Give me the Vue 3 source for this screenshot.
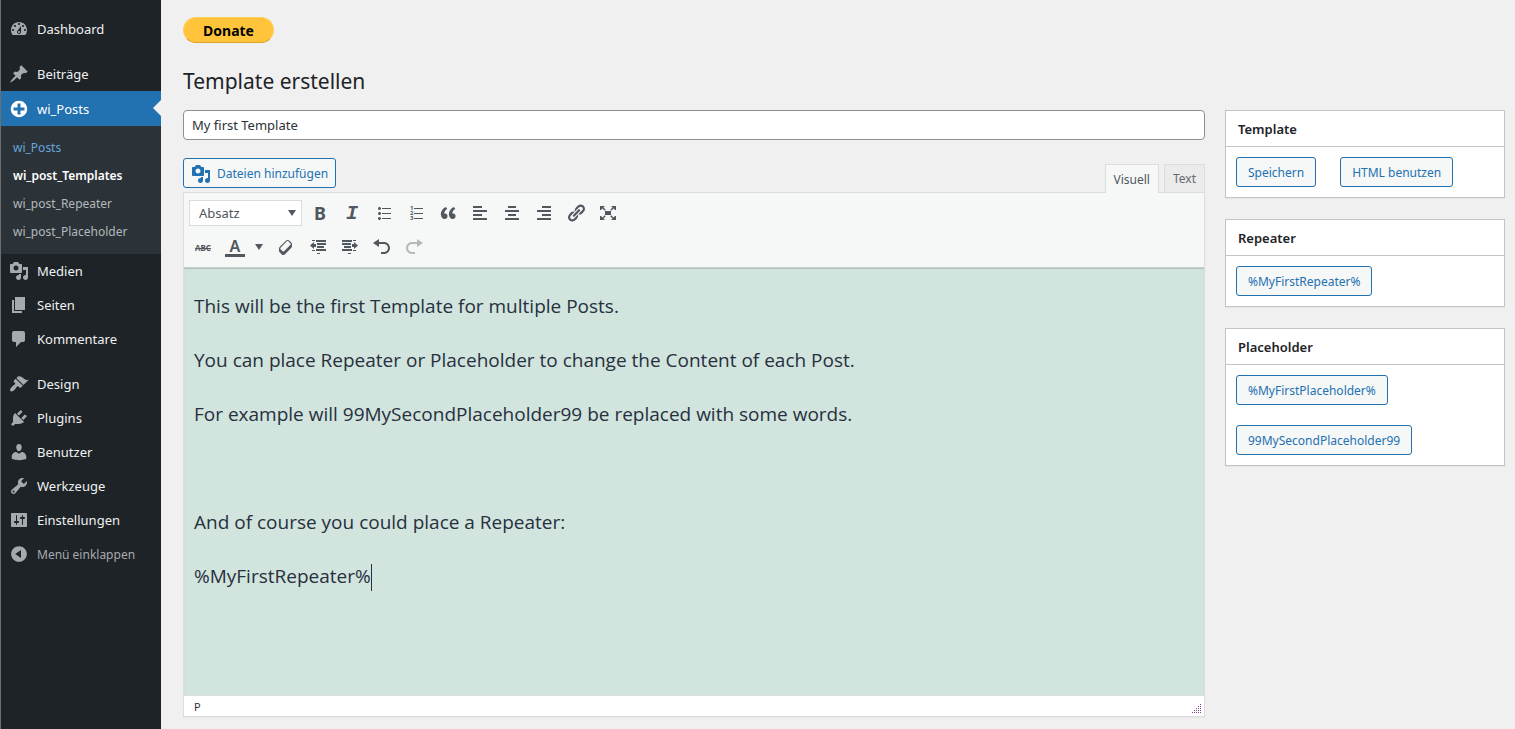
<script setup>
import { ref } from 'vue'

const title = ref('My first Template')
const format = ref('Absatz')

const icons = {
  dashboard: 'M3.76 16h12.48c1.1-1.37 1.76-3.11 1.76-5 0-4.42-3.58-8-8-8s-8 3.58-8 8c0 1.89.66 3.63 1.76 5zM10 4c.55 0 1 .45 1 1s-.45 1-1 1-1-.45-1-1 .45-1 1-1zM6 6c.55 0 1 .45 1 1s-.45 1-1 1-1-.45-1-1 .45-1 1-1zm8 0c.55 0 1 .45 1 1s-.45 1-1 1-1-.45-1-1 .45-1 1-1zm-5.37 5.55L12 7v6c0 1.1-.9 2-2 2s-2-.9-2-2c0-.57.24-1.08.63-1.45zM4 10c.55 0 1 .45 1 1s-.45 1-1 1-1-.45-1-1 .45-1 1-1zm12 0c.55 0 1 .45 1 1s-.45 1-1 1-1-.45-1-1 .45-1 1-1zm-5 3c0-.55-.45-1-1-1s-1 .45-1 1 .45 1 1 1 1-.45 1-1z',
  pin: 'M10.44 3.02l1.82-1.82 6.36 6.35-1.83 1.82c-1.05-.68-2.48-.57-3.41.36l-.75.75c-.92.93-1.04 2.35-.35 3.41l-1.83 1.82-2.41-2.41-2.8 2.79c-.42.42-3.38 2.71-3.8 2.29s1.86-3.39 2.28-3.81l2.79-2.79L4.1 9.36l1.83-1.82c1.05.69 2.48.57 3.4-.36l.75-.75c.93-.92 1.05-2.35.36-3.41z',
  plus: 'M15.8 4.2c3.2 3.21 3.2 8.39 0 11.6-3.21 3.2-8.39 3.2-11.6 0C1 12.59 1 7.41 4.2 4.2 7.41 1 12.59 1 15.8 4.2zm-4.3 11.3v-4h4v-3h-4v-4h-3v4h-4v3h4v4h3z',
  media: 'M13 11V4c0-.55-.45-1-1-1h-1.67L9 1H5L3.67 3H2c-.55 0-1 .45-1 1v7c0 .55.45 1 1 1h10c.55 0 1-.45 1-1zM7 4.5c1.38 0 2.5 1.12 2.5 2.5S8.38 9.5 7 9.5 4.5 8.38 4.5 7 5.62 4.5 7 4.5zM14 6h5v10.5c0 1.38-1.12 2.5-2.5 2.5S14 17.88 14 16.5s1.12-2.5 2.5-2.5c.17 0 .34.02.5.05V9h-3V6zm-4 8.05V13h2v3.5c0 1.38-1.12 2.5-2.5 2.5S7 17.88 7 16.5 8.12 14 9.5 14c.17 0 .34.02.5.05z',
  page: 'M6 15V2h10v13H6zm-1 1h8v2H3V5h2v11z',
  comment: 'M5 2h9c1.1 0 2 .9 2 2v7c0 1.1-.9 2-2 2h-2l-5 5v-5H5c-1.1 0-2-.9-2-2V4c0-1.1.9-2 2-2z',
  brush: 'M14.48 11.06L7.41 3.99l1.5-1.5c.5-.56 2.3-.47 3.51.32 1.21.8 1.43 1.28 2.91 2.1 1.18.64 2.45 1.26 4.45.85zm-.71.71L6.7 4.7 4.93 6.47c-.39.39-.39 1.02 0 1.41l1.06 1.06c.39.39.39 1.03 0 1.42-.6.6-1.43 1.11-2.21 1.69-.35.26-.7.53-1.01.84C1.43 14.23.4 16.08 1.4 17.07c.99 1 2.84-.03 4.18-1.36.31-.31.58-.66.85-1.02.57-.78 1.08-1.61 1.69-2.21.39-.39 1.02-.39 1.41 0l1.06 1.06c.39.39 1.02.39 1.41 0z',
  plug: 'M13.11 4.36L9.87 7.6 8 5.73l3.24-3.24c.35-.34 1.05-.2 1.56.32.52.51.66 1.21.31 1.55zm-8 1.77l.91-1.12 9.01 9.01-1.19.84c-.71.71-2.63 1.16-3.82 1.16H6.14L4.9 17.26c-.59.59-1.54.59-2.12 0-.59-.58-.59-1.53 0-2.12l1.24-1.24v-3.88c0-1.13.4-3.19 1.09-3.89zm7.26 3.97l3.24-3.24c.34-.35 1.04-.21 1.55.31.52.51.66 1.21.31 1.55l-3.24 3.25z',
  user: 'M10 9.25c-2.27 0-2.73-3.44-2.73-3.44C7 4.02 7.82 2 9.97 2c2.16 0 2.98 2.02 2.71 3.81 0 0-.41 3.44-2.68 3.44zm0 2.57L12.72 10c2.39 0 4.52 2.33 4.52 4.53v2.49s-3.65 1.13-7.24 1.13c-3.65 0-7.24-1.13-7.24-1.13v-2.49c0-2.25 1.94-4.48 4.47-4.48z',
  wrench: 'M16.68 9.77c-1.34 1.34-3.3 1.67-4.95.99l-5.41 6.52c-.99.99-2.59.99-3.58 0s-.99-2.59 0-3.57l6.52-5.42c-.68-1.65-.35-3.61.99-4.95 1.28-1.28 3.12-1.62 4.72-1.06l-2.89 2.89 2.82 2.82 2.86-2.87c.53 1.58.18 3.39-1.08 4.65zM3.81 16.21c.4.39 1.04.39 1.43 0 .4-.4.4-1.04 0-1.43-.39-.4-1.03-.4-1.43 0-.39.39-.39 1.03 0 1.43z',
  sliders: 'M18 16V4c0-.55-.45-1-1-1H3c-.55 0-1 .45-1 1v12c0 .55.45 1 1 1h14c.55 0 1-.45 1-1zM8 11h1c.55 0 1 .45 1 1s-.45 1-1 1H8v1.5c0 .28-.22.5-.5.5s-.5-.22-.5-.5V13H6c-.55 0-1-.45-1-1s.45-1 1-1h1V5.5c0-.28.22-.5.5-.5s.5.22.5.5V11zm5-2h-1c-.55 0-1-.45-1-1s.45-1 1-1h1V5.5c0-.28.22-.5.5-.5s.5.22.5.5V7h1c.55 0 1 .45 1 1s-.45 1-1 1h-1v5.5c0 .28-.22.5-.5.5s-.5-.22-.5-.5V9z',
  collapse: 'M10 2.16c4.33 0 7.84 3.51 7.84 7.84s-3.51 7.84-7.84 7.84S2.16 14.33 2.16 10 5.71 2.16 10 2.16zm2 11.72V6.12L6.18 9.97z',
  bullets: 'M5.5 7C4.67 7 4 6.33 4 5.5 4 4.68 4.67 4 5.5 4 6.32 4 7 4.68 7 5.5 7 6.33 6.32 7 5.5 7zM8 5h9v1H8V5zm-2.5 7c-.83 0-1.5-.67-1.5-1.5C4 9.68 4.67 9 5.5 9c.82 0 1.5.68 1.5 1.5 0 .83-.68 1.5-1.5 1.5zM8 10h9v1H8v-1zm-2.5 7c-.83 0-1.5-.67-1.5-1.5 0-.82.67-1.5 1.5-1.5.82 0 1.5.68 1.5 1.5 0 .83-.68 1.5-1.5 1.5zM8 15h9v1H8v-1z',
  quote: 'M9.49 13.22c0-.74-.2-1.38-.61-1.9-.62-.78-1.83-.88-2.53-.72-.29-1.65 1.11-3.75 2.92-4.65L7.88 4c-2.73 1.3-5.42 4.28-4.96 8.05C3.21 14.43 4.59 16 6.54 16c.85 0 1.56-.25 2.12-.75s.83-1.18.83-2.03zm8.05 0c0-.74-.2-1.38-.61-1.9-.63-.78-1.83-.88-2.53-.72-.29-1.65 1.11-3.75 2.92-4.65L15.93 4c-2.73 1.3-5.41 4.28-4.95 8.05.29 2.38 1.66 3.95 3.61 3.95.85 0 1.56-.25 2.12-.75s.83-1.18.83-2.03z',
  left: 'M12 5V3H3v2h9zm5 4V7H3v2h14zm-5 4v-2H3v2h9zm5 4v-2H3v2h14z',
  center: 'M14 5V3H6v2h8zm3 4V7H3v2h14zm-3 4v-2H6v2h8zm3 4v-2H3v2h14z',
  right: 'M17 5V3H8v2h9zm0 4V7H3v2h14zm0 4v-2H8v2h9zm0 4v-2H3v2h14z',
  link: 'M17.74 2.76c1.68 1.69 1.68 4.41 0 6.1l-1.53 1.52c-1.12 1.12-2.7 1.47-4.14 1.09l2.62-2.61.76-.77.76-.76c.84-.84.84-2.2 0-3.04-.84-.85-2.2-.85-3.04 0l-.77.76-3.38 3.38c-.37-1.44-.02-3.02 1.1-4.14l1.52-1.53c1.69-1.68 4.42-1.68 6.1 0zM8.59 13.43l5.34-5.34c.42-.42.42-1.1 0-1.52-.44-.43-1.13-.39-1.53 0l-5.33 5.34c-.42.42-.42 1.1 0 1.52.44.43 1.13.39 1.52 0zm-.76 2.29l4.14-4.15c.38 1.44.03 3.02-1.09 4.14l-1.52 1.53c-1.69 1.68-4.41 1.68-6.1 0-1.68-1.68-1.68-4.42 0-6.1l1.53-1.52c1.12-1.12 2.7-1.47 4.14-1.1l-4.14 4.15c-.85.84-.85 2.2 0 3.05.84.84 2.2.84 3.04 0z',
  expand: 'M7 8h6v4H7zM2 3h5L5.400 4.400 7.800 6.800 6.800 7.800 4.400 5.400 3 7H2zM18 3v4h-1l-1.400-1.600-2.400 2.400-1-1 2.400-2.400L13 3zM2 17v-4h1l1.400 1.600 2.400-2.400 1 1-2.400 2.400L7 17zM18 17h-5l1.600-1.400-2.400-2.400 1-1 2.400 2.400L17 13h1z',
  eraser: 'M14.29 4.59l1.1 1.11c.41.4.61.94.61 1.47v2.12c0 .53-.2 1.07-.61 1.47l-6.63 6.63c-.4.41-.94.61-1.47.61s-1.07-.2-1.47-.61l-1.11-1.1-1.1-1.11c-.41-.4-.61-.94-.61-1.47v-2.12c0-.54.2-1.07.61-1.48l6.63-6.62c.4-.41.94-.61 1.47-.61s1.06.2 1.47.61zm-6.21 9.7l6.42-6.42c.39-.39.39-1.03 0-1.43L12.36 4.3c-.19-.19-.45-.29-.72-.29s-.52.1-.71.29l-6.42 6.42c-.39.4-.39 1.04 0 1.43l2.14 2.14c.38.38 1.04.38 1.43 0z',
  outdent: 'M4 3h3v1H4zM8 3h10v2H8zM9 6h9v2H9zM9 9h7v2H9zM8 12h10v2H8zM4 13h3v1H4zM9 16h3v1H9zM2 8.500L6 5v2h2v3H6v2z',
  indent: 'M13 3h3v1h-3zM2 3h10v2H2zM2 6h9v2H2zM4 9h7v2H4zM2 12h10v2H2zM13 13h3v1h-3zM8 16h3v1H8zM18 8.500L14 5v2h-2v3h2v2z',
  undo: 'M12 5H7V2L1 6l6 4V7h5c2.200 0 4 1.800 4 4s-1.800 4-4 4H9v2h3c3.300 0 6-2.700 6-6s-2.700-6-6-6z',
  redo: 'M8 5h5V2l6 4-6 4V7H8c-2.200 0-4 1.800-4 4s1.800 4 4 4h3v2H8c-3.300 0-6-2.700-6-6s2.700-6 6-6z'
}

const menu = [
  [{ label: 'Dashboard', icon: 'dashboard' }],
  [
    { label: 'Beiträge', icon: 'pin' },
    {
      label: 'wi_Posts', icon: 'plus', current: true,
      children: [
        { label: 'wi_Posts', hover: true },
        { label: 'wi_post_Templates', active: true },
        { label: 'wi_post_Repeater' },
        { label: 'wi_post_Placeholder' }
      ]
    },
    { label: 'Medien', icon: 'media' },
    { label: 'Seiten', icon: 'page' },
    { label: 'Kommentare', icon: 'comment' }
  ],
  [
    { label: 'Design', icon: 'brush' },
    { label: 'Plugins', icon: 'plug' },
    { label: 'Benutzer', icon: 'user' },
    { label: 'Werkzeuge', icon: 'wrench' },
    { label: 'Einstellungen', icon: 'sliders' }
  ]
]

const rowOne = [
  { name: 'Fett', letter: 'B', cls: 'bold' },
  { name: 'Kursiv', letter: 'I', cls: 'italic' },
  { name: 'Aufzählung', icon: 'bullets' },
  { name: 'Nummerierung', numbers: true },
  { name: 'Zitat', icon: 'quote' },
  { name: 'Linksbündig', icon: 'left' },
  { name: 'Zentriert', icon: 'center' },
  { name: 'Rechtsbündig', icon: 'right' },
  { name: 'Link', icon: 'link' },
  { name: 'Vollbild', icon: 'expand' }
]

const rowTwo = [
  { name: 'Formatierung entfernen', icon: 'eraser' },
  { name: 'Einzug verkleinern', icon: 'outdent' },
  { name: 'Einzug vergrößern', icon: 'indent' },
  { name: 'Rückgängig', icon: 'undo' },
  { name: 'Wiederholen', icon: 'redo', disabled: true }
]

const panels = [
  { title: 'Template', buttons: ['Speichern', 'HTML benutzen'] },
  { title: 'Repeater', buttons: ['%MyFirstRepeater%'] },
  { title: 'Placeholder', buttons: ['%MyFirstPlaceholder%', '99MySecondPlaceholder99'], stacked: true }
]
</script>

<template>
  <div class="admin">
    <nav class="sidebar" aria-label="Hauptmenü">
      <ul v-for="(group, g) in menu" :key="g" class="menu">
        <li v-for="item in group" :key="item.label">
          <a href="#" class="item" :class="{ current: item.current }">
            <svg class="icon" viewBox="0 0 20 20" aria-hidden="true"><path fill-rule="evenodd" :d="icons[item.icon]" /></svg>
            <span>{{ item.label }}</span>
          </a>
          <ul v-if="item.children" class="submenu">
            <li v-for="child in item.children" :key="child.label">
              <a href="#" :class="{ hover: child.hover, active: child.active }">{{ child.label }}</a>
            </li>
          </ul>
        </li>
      </ul>
      <button class="item collapse" type="button">
        <svg class="icon" viewBox="0 0 20 20" aria-hidden="true"><path fill-rule="evenodd" :d="icons.collapse" /></svg>
        <span>Menü einklappen</span>
      </button>
    </nav>

    <main class="content">
      <button class="donate" type="button">Donate</button>
      <h1>Template erstellen</h1>

      <div class="columns">
        <div class="primary">
          <input v-model="title" class="title" type="text" aria-label="Titel">

          <div class="tools">
            <button class="button media" type="button">
              <svg class="icon" viewBox="0 0 20 20" aria-hidden="true"><path fill-rule="evenodd" :d="icons.media" /></svg>
              <span>Dateien hinzufügen</span>
            </button>
            <div class="tabs">
              <button class="tab selected" type="button">Visuell</button>
              <button class="tab" type="button">Text</button>
            </div>
          </div>

          <section class="editor">
            <div class="toolbar">
              <div class="row">
                <div class="format">
                  <select v-model="format" aria-label="Absatzformat">
                    <option>Absatz</option>
                  </select>
                  <svg class="arrow" viewBox="0 0 10 6" aria-hidden="true"><path d="M1 0h8L5 6z" /></svg>
                </div>
                <button v-for="b in rowOne" :key="b.name" class="tool" type="button" :aria-label="b.name">
                  <span v-if="b.letter" :class="b.cls">{{ b.letter }}</span>
                  <svg v-else-if="b.numbers" class="icon" viewBox="0 0 20 20" aria-hidden="true">
                    <path d="M8 5h9v1H8zM8 10h9v1H8zM8 15h9v1H8z" />
                    <text x="4" y="7">1</text>
                    <text x="4" y="12">2</text>
                    <text x="4" y="17">3</text>
                  </svg>
                  <svg v-else class="icon" viewBox="0 0 20 20" aria-hidden="true"><path :d="icons[b.icon]" /></svg>
                </button>
              </div>
              <div class="row">
                <button class="tool" type="button" aria-label="Durchgestrichen"><s class="strike">ABC</s></button>
                <div class="split">
                  <button class="tool" type="button" aria-label="Textfarbe"><span class="color">A</span></button>
                  <button class="more" type="button" aria-label="Farbe wählen">
                    <svg class="arrow" viewBox="0 0 10 6" aria-hidden="true"><path d="M1 0h8L5 6z" /></svg>
                  </button>
                </div>
                <button v-for="b in rowTwo" :key="b.name" class="tool" type="button" :aria-label="b.name" :disabled="b.disabled">
                  <svg class="icon" viewBox="0 0 20 20" aria-hidden="true"><path :d="icons[b.icon]" /></svg>
                </button>
              </div>
            </div>

            <div class="document" contenteditable="true" role="textbox" aria-multiline="true" aria-label="Inhalt" spellcheck="false">
              <p>This will be the first Template for multiple Posts.</p>
              <p>You can place Repeater or Placeholder to change the Content of each Post.</p>
              <p>For example will 99MySecondPlaceholder99 be replaced with some words.</p>
              <p>&nbsp;</p>
              <p>And of course you could place a Repeater:</p>
              <p>%MyFirstRepeater%<span class="caret"></span></p>
            </div>

            <footer class="status">
              <span>P</span>
              <svg class="grip" viewBox="0 0 10 10" aria-hidden="true">
                <path d="M8 0h1v1H8zM6 2h1v1H6zM8 2h1v1H8zM4 4h1v1H4zM6 4h1v1H6zM8 4h1v1H8zM2 6h1v1H2zM4 6h1v1H4zM6 6h1v1H6zM8 6h1v1H8zM0 8h1v1H0zM2 8h1v1H2zM4 8h1v1H4zM6 8h1v1H6zM8 8h1v1H8z" />
              </svg>
            </footer>
          </section>
        </div>

        <aside class="panels">
          <section v-for="p in panels" :key="p.title" class="panel">
            <h2>{{ p.title }}</h2>
            <div class="actions" :class="{ stacked: p.stacked }">
              <button v-for="label in p.buttons" :key="label" class="button" type="button">{{ label }}</button>
            </div>
          </section>
        </aside>
      </div>
    </main>
  </div>
</template>

<style>
body {
  margin: 0;
  background: #f0f0f0;
}
</style>

<style scoped>
.admin {
  display: flex;
  min-height: 100vh;
  font-family: "Noto Sans", "Open Sans", sans-serif;
  font-size: 13px;
  color: #3c434a;
  background: #f0f0f0;
}

.admin *,
.admin *::before,
.admin *::after {
  box-sizing: border-box;
}

button,
input,
select {
  font: inherit;
  margin: 0;
}

button {
  cursor: pointer;
}

.icon {
  display: block;
  flex: none;
  width: 20px;
  height: 20px;
  fill: currentColor;
}

/* Sidebar */
.sidebar {
  flex: 0 0 161px;
  padding-top: 12px;
  border-left: 1px solid #6e6e6e;
  background: #1d2327;
}

.menu,
.submenu {
  margin: 0;
  padding: 0;
  list-style: none;
}

.menu + .menu {
  margin-top: 11px;
}

.item {
  position: relative;
  display: flex;
  align-items: center;
  gap: 8px;
  width: 100%;
  height: 34px;
  padding: 0 8px;
  border: 0;
  background: none;
  color: #f0f0f1;
  text-decoration: none;
}

.item .icon {
  color: #a7aaad;
}

.item.current {
  height: 35px;
  background: #2271b1;
  color: #fff;
}

.item.current .icon {
  color: #fff;
}

.item.current::after {
  content: "";
  position: absolute;
  top: 9px;
  right: 0;
  border: 8px solid transparent;
  border-left-width: 0;
  border-right-color: #f0f0f0;
}

.collapse {
  font-size: 12px;
  color: #a7aaad;
}

.submenu {
  padding: 8px 0;
  background: #2c3338;
}

.submenu a {
  display: block;
  padding: 0 12px;
  font-size: 12px;
  line-height: 28px;
  color: #b4b8bc;
  text-decoration: none;
}

.submenu a.hover {
  color: #66a3dc;
}

.submenu a.active {
  font-weight: 600;
  color: #fff;
}

/* Content */
.content {
  flex: 1;
  min-width: 0;
  padding: 17px 10px 12px 22px;
}

.donate {
  display: block;
  width: 91px;
  height: 26px;
  padding: 1px 0 0;
  border: 1px solid #ffcf5a;
  border-bottom-color: #dfa22c;
  border-radius: 13px;
  background: #ffc439;
  font-size: 14px;
  font-weight: 700;
  line-height: 23px;
  color: #000;
}

h1 {
  margin: 22px 0 13px;
  font-family: "Noto Sans", "Open Sans", sans-serif;
  font-size: 21px;
  font-weight: 400;
  line-height: 32px;
  color: #1d2327;
}

.columns {
  display: flex;
  align-items: flex-start;
  gap: 20px;
}

.primary {
  flex: 1;
  min-width: 0;
}

.title {
  display: block;
  width: 100%;
  height: 30px;
  padding: 0 8px;
  border: 1px solid #8c8f94;
  border-radius: 4px;
  background: #fff;
  color: #2c3338;
}

.tools {
  display: flex;
  align-items: flex-start;
  justify-content: space-between;
  height: 34px;
  margin-top: 18px;
}

.button {
  height: 30px;
  padding: 2px 11px 0;
  border: 1px solid #2271b1;
  border-radius: 3px;
  background: #f6f7f7;
  font-size: 12px;
  line-height: 26px;
  color: #2271b1;
}

.media {
  display: flex;
  align-items: center;
  gap: 6px;
  padding: 2px 7px 0;
}

.tabs {
  display: flex;
  gap: 5px;
  margin-top: 6px;
}

.tab {
  height: 28px;
  padding: 0 8px;
  border: 1px solid #dcdcde;
  border-bottom: 0;
  background: #ebebeb;
  font-size: 12px;
  color: #646970;
}

.tab.selected {
  position: relative;
  height: 29px;
  background: #f6f7f7;
  color: #50575e;
}

/* Editor */
.editor {
  border: 1px solid #dcdcde;
  box-shadow: 0 1px 1px rgba(0, 0, 0, 0.04);
}

.toolbar {
  height: 75px;
  padding: 3px 4px;
  background: #f6f7f7;
  border-bottom: 1px solid #c9d0cf;
}

.row {
  display: flex;
  align-items: center;
  gap: 2px;
  height: 34px;
  color: #50575e;
}

.format {
  position: relative;
  margin: 0 1px;
}

select {
  display: block;
  width: 113px;
  height: 26px;
  padding: 0 9px;
  border: 1px solid #dcdcde;
  border-radius: 0;
  appearance: none;
  background: #fff;
  color: #50575e;
}

.arrow {
  display: block;
  width: 10px;
  height: 6px;
  fill: #50575e;
}

.format .arrow {
  position: absolute;
  top: 10px;
  right: 5px;
  pointer-events: none;
}

.tool,
.more {
  display: flex;
  align-items: center;
  justify-content: center;
  width: 30px;
  height: 30px;
  padding: 0;
  border: 0;
  background: none;
  color: #50575e;
}

.tool:disabled {
  color: #b5b9bc;
}

.split {
  display: flex;
  margin-right: 1px;
}

.more {
  width: 18px;
}

.bold {
  font-size: 18px;
  font-weight: 700;
}

.italic {
  font-family: "Liberation Mono", monospace;
  font-size: 20px;
  font-style: italic;
  font-weight: 700;
}

.tool text {
  font-size: 6px;
  font-weight: 700;
}

.strike {
  font-size: 8px;
  font-weight: 700;
}

.color {
  width: 20px;
  height: 20px;
  border-bottom: 3px solid #50575e;
  font-size: 16px;
  font-weight: 600;
  line-height: 18px;
}

.document {
  min-height: 428px;
  padding: 23px 10px;
  border-bottom: 1px solid #dcdcde;
  background: #d1e4dd;
  box-shadow: inset 0 1px 1px rgba(0, 0, 0, 0.16);
  color: #28303d;
  font-family: "Open Sans", "Noto Sans", sans-serif;
  font-size: 19px;
  line-height: 30px;
  outline: 0;
}

.document p {
  margin: 0 0 24px;
}

.caret {
  display: inline-block;
  width: 1px;
  height: 27px;
  background: #28303d;
  vertical-align: middle;
}

.status {
  display: flex;
  align-items: center;
  justify-content: space-between;
  height: 20px;
  padding: 0 2px 0 10px;
  background: #fff;
  font-size: 11px;
  color: #2c3338;
}

.grip {
  align-self: flex-end;
  width: 10px;
  height: 10px;
  margin-bottom: 2px;
  fill: #80468a;
}

/* Side panels */
.panels {
  flex: 0 0 280px;
  display: grid;
  gap: 21px;
}

.panel {
  border: 1px solid #c3c4c7;
  background: #fff;
  box-shadow: 0 1px 1px rgba(0, 0, 0, 0.04);
}

h2 {
  margin: 0;
  padding: 1px 12px 0;
  border-bottom: 1px solid #c3c4c7;
  font-size: 13px;
  font-weight: 600;
  line-height: 34px;
  color: #1d2327;
}

.actions {
  display: flex;
  gap: 24px;
  padding: 10px;
}

.actions.stacked {
  flex-direction: column;
  align-items: flex-start;
  gap: 20px;
}
</style>
